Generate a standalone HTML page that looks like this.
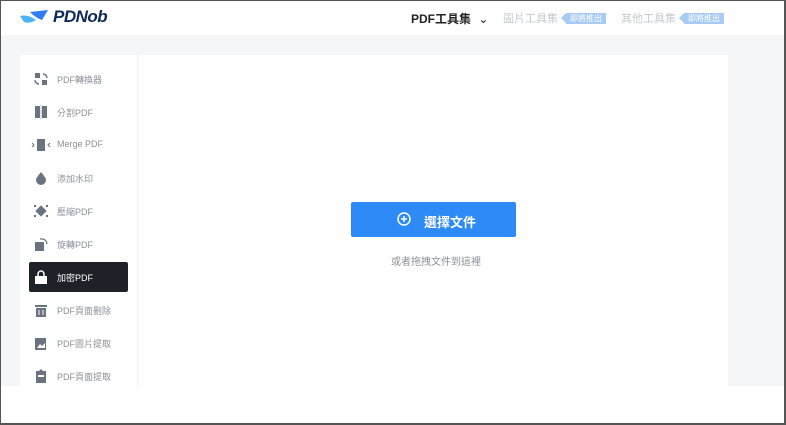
<!DOCTYPE html>
<html><head><meta charset="utf-8"><style>
*{margin:0;padding:0;box-sizing:border-box}
html,body{width:786px;height:425px;overflow:hidden;background:#fff}
body{font-family:"Liberation Sans","Noto Sans CJK TC",sans-serif;position:relative}
.frame{position:absolute;inset:0;border:1px solid #555;border-right-width:2px;border-bottom-width:2px;pointer-events:none;z-index:10}
.hdr{position:absolute;left:0;top:0;width:786px;height:35px;background:#fff}
.logo{position:absolute;left:20px;top:8px}
.logot{position:absolute;left:53px;top:7px;font-size:17px;font-weight:bold;font-style:italic;color:#0e2a5a;letter-spacing:-0.5px}
.nav{position:absolute;top:10px;font-size:12px}
.tag{display:inline-block;background:#a7cbf5;color:#fff;font-size:8px;padding:1px 4px;height:11px;line-height:10px;vertical-align:1px;position:relative;margin-left:8px}
.tag:before{content:"";position:absolute;left:-5px;top:0;border-right:5px solid #a7cbf5;border-top:5.5px solid transparent;border-bottom:5.5px solid transparent}
.bg{position:absolute;left:0;top:35px;width:786px;height:351px;background:#f5f6f8}
.side{position:absolute;left:20px;top:55px;width:117px;height:331px;background:#fff}
.main{position:absolute;left:139px;top:55px;width:589px;height:331px;background:#fff}
.item{position:absolute;left:9px;width:99px;height:30px;font-size:9px;color:#8a909b}
.item svg{position:absolute;left:5px;top:8px}
.item span{position:absolute;left:28px;top:9px}
.item.act{background:#1e2128;border-radius:2px;color:#fff}
.btn{position:absolute;left:351px;top:202px;width:165px;height:35px;background:#2e8af6;border-radius:2px;color:#fff;font-size:13px;font-weight:bold}
.btn span{position:absolute;left:73px;top:10px}
.sub{position:absolute;left:391px;top:253px;font-size:10px;color:#8a8f99}
</style></head><body>
<div class="hdr">
<svg class="logo" width="32" height="16" viewBox="0 0 32 16"><path d="M0 8 Q8 6 16 12 Q10 16 4 14 Z" fill="#4cb3f0"/><path d="M10 4 L28 2 L22 12 Q16 10 10 4Z" fill="#2e7df2"/></svg>
<div class="logot">PDNob</div>
<div class="nav" style="left:411px;color:#222;font-weight:bold">PDF工具集 <span style="font-weight:normal;margin-left:4px">⌄</span></div>
<div class="nav" style="left:503px;color:#c4c8ce;font-size:11px">圖片工具集<span class="tag">即將推出</span></div>
<div class="nav" style="left:621px;color:#c4c8ce;font-size:11px">其他工具集<span class="tag">即將推出</span></div>
</div>
<div class="bg"></div>
<div class="side">
<div class="item" style="top:9px"><svg width="14" height="14"><rect x="1" y="1" width="5" height="5" fill="#6b7280"/><rect x="8" y="8" width="5" height="5" fill="#6b7280"/><path d="M9 2a4 4 0 0 1 4 4M5 12a4 4 0 0 1-4-4" stroke="#6b7280" fill="none" stroke-width="1.5"/></svg><span>PDF轉換器</span></div>
<div class="item" style="top:42px"><svg width="14" height="14"><rect x="1" y="1" width="5" height="12" fill="#6b7280"/><rect x="8" y="1" width="5" height="12" fill="#6b7280"/><line x1="7" y1="0" x2="7" y2="14" stroke="#aaa" stroke-dasharray="1.5 1"/></svg><span>分割PDF</span></div>
<div class="item" style="top:75px"><svg width="20" height="14" style="left:2px"><path d="M1 5l2 2-2 2" stroke="#6b7280" fill="none"/><rect x="6" y="1" width="8" height="12" fill="#6b7280"/><path d="M19 5l-2 2 2 2" stroke="#6b7280" fill="none"/></svg><span>Merge PDF</span></div>
<div class="item" style="top:108px"><svg width="14" height="14"><path d="M7 1 Q12 7 12 9 A5 5 0 0 1 2 9 Q2 7 7 1Z" fill="#6b7280"/></svg><span>添加水印</span></div>
<div class="item" style="top:141px"><svg width="14" height="14"><rect x="3" y="3" width="8" height="8" fill="#6b7280" transform="rotate(45 7 7)"/><path d="M0 2l2 0M12 2l2 0M0 12l2 0M12 12l2 0" stroke="#6b7280" stroke-width="2"/></svg><span>壓縮PDF</span></div>
<div class="item" style="top:174px"><svg width="14" height="14"><rect x="1" y="5" width="9" height="9" fill="#6b7280"/><path d="M6 2 Q12 1 13 7" stroke="#6b7280" fill="none" stroke-width="1.3"/></svg><span>旋轉PDF</span></div>
<div class="item act" style="top:207px"><svg width="14" height="14"><path d="M4 6V4a3 3 0 0 1 6 0v2" stroke="#fff" fill="none" stroke-width="1.5"/><rect x="1" y="6" width="12" height="8" fill="#fff"/></svg><span>加密PDF</span></div>
<div class="item" style="top:240px"><svg width="14" height="14"><rect x="1" y="2" width="12" height="2" fill="#6b7280"/><path d="M2 5h10v9H2z" fill="#6b7280"/><path d="M5 7v5M9 7v5" stroke="#fff"/></svg><span>PDF頁面刪除</span></div>
<div class="item" style="top:273px"><svg width="14" height="14"><rect x="1" y="2" width="11" height="12" fill="#6b7280"/><path d="M3 12l3-4 2 2 3-3v5z" fill="#fff"/></svg><span>PDF圖片提取</span></div>
<div class="item" style="top:306px"><svg width="14" height="14"><rect x="2" y="2" width="10" height="12" fill="#6b7280"/><rect x="4" y="6" width="6" height="2" fill="#fff"/><path d="M5 2l2-2 2 2" fill="#6b7280"/></svg><span>PDF頁面提取</span></div>
</div>
<div class="main"></div>
<div class="btn"><svg width="14" height="14" style="position:absolute;left:46px;top:10px"><circle cx="7" cy="7" r="6" stroke="#fff" stroke-width="1.5" fill="none"/><path d="M7 4v6M4 7h6" stroke="#fff" stroke-width="1.5"/></svg><span>選擇文件</span></div>
<div class="sub">或者拖拽文件到這裡</div>
<div class="frame"></div>
</body></html>
